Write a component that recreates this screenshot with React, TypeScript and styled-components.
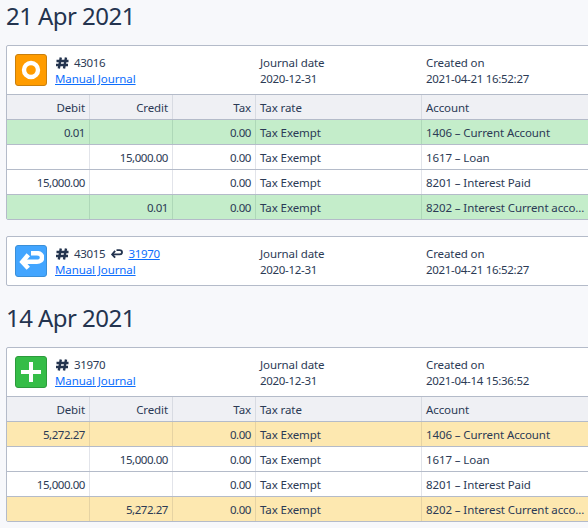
import React from "react";
import styled, { createGlobalStyle } from "styled-components";

const Global = createGlobalStyle`
  html, body { margin: 0; padding: 0; background: #f7f8fb; overflow: hidden; }
  body { font-family: "Noto Sans", "Open Sans", sans-serif; font-size: 11.5px; letter-spacing: -0.1px; color: #2b3a55; width: 588px; height: 528px; }
`;
const Page = styled.div`padding: 0 0 0 6px; width: 640px; box-sizing: border-box;`;
const Heading = styled.h2`
  margin: 0; height: 45px; box-sizing: border-box;
  font-size: 24px; font-weight: 400; line-height: 32px; color: #24344f; letter-spacing: -0.55px;
`;
const Card = styled.div<{ $gap?: number }>`
  background: #fff; border: 1px solid #b4bbc9; border-radius: 2px;
  width: 640px; box-sizing: border-box; margin-bottom: ${(p) => p.$gap ?? 0}px;
`;
const Head = styled.div`
  height: 48px; display: grid; grid-template-columns: 253px 166px 1fr; align-items: center;
`;
const Identity = styled.div`display: flex; align-items: center; padding-left: 8px; gap: 8px;`;
const Badge = styled.div<{ $bg: string; $edge: string }>`
  width: 32px; height: 32px; border-radius: 3px; box-sizing: border-box;
  background: ${(p) => p.$bg}; border: 1px solid ${(p) => p.$edge};
  display: flex; align-items: center; justify-content: center;
`;
const Lines = styled.div`display: flex; flex-direction: column; line-height: 16px; padding-top: 2px;`;
const IdLine = styled.div`display: flex; align-items: center; gap: 5px;`;
const Num = styled.span`letter-spacing: -0.3px;`;
const Link = styled.a`color: #0d6efd; text-decoration: underline;`;
const Meta = styled.div`display: flex; flex-direction: column; line-height: 16px; padding-top: 2px; color: #2b3a55;`;
const Row = styled.div<{ $bg?: string }>`
  display: grid; grid-template-columns: 83px 83px 83px 166px 165px; height: 25px;
  box-sizing: border-box; border-top: 1px solid #b4bbc9;
  background: ${(p) => p.$bg ?? "#fff"};
`;
const Cell = styled.div<{ $right?: boolean; $line?: string; $num?: boolean }>`
  line-height: 26px; padding: 0 4px; box-sizing: border-box;
  text-align: ${(p) => (p.$right ? "right" : "left")};
  border-right: 1px solid ${(p) => p.$line ?? "#e2e4ea"};
  letter-spacing: ${(p) => (p.$num ? "-0.45px" : "-0.1px")};
  white-space: nowrap; overflow: hidden;
  &:last-child { border-right: 0; }
`;

const Hash = () => (
  <svg width="14" height="12" viewBox="0 0 14 12" fill="none" stroke="#24344f" strokeWidth="2.4">
    <path d="M5.8 .5 3.8 11.5M11 .5 9 11.5M1.5 4h12M1 8h12" />
  </svg>
);
const ReturnIcon = ({ size, color, w }: { size: number; color: string; w: number }) => (
  <svg width={size} height={size * 0.75} viewBox="0 0 24 18" fill="none" stroke={color} strokeWidth={w}>
    <path d="M9.5 3.5 4 10l5.5 6" strokeLinejoin="miter" />
    <path d="M4 10h13.5c3 0 4.7-1.6 4.7-4s-1.7-4-4.7-4H12" />
  </svg>
);

type R = [string, string, string, string?];
const Table = ({ rows, bg, line }: { rows: R[]; bg: string; line: string }) => (
  <>
    <Row $bg="#eff0f4">
      <Cell $right $line="#d8dbe2">Debit</Cell><Cell $right $line="#d8dbe2">Credit</Cell><Cell $right $line="#d8dbe2">Tax</Cell>
      <Cell $line="#d8dbe2">Tax rate</Cell><Cell>Account</Cell>
    </Row>
    {rows.map((r, i) => {
      const hi = r[3] === "hi";
      const cl = hi ? line : undefined;
      return (
        <Row key={i} $bg={hi ? bg : "#fff"}>
          <Cell $right $num $line={cl}>{r[0]}</Cell>
          <Cell $right $num $line={cl}>{r[1]}</Cell>
          <Cell $right $num $line={cl}>0.00</Cell>
          <Cell $line={cl}>Tax Exempt</Cell>
          <Cell $line={cl}>{r[2]}</Cell>
        </Row>
      );
    })}
  </>
);

const Header = ({ badge, no, extra, date, created }: { badge: React.ReactNode; no: string; extra?: React.ReactNode; date: string; created: string }) => (
  <Head>
    <Identity>
      {badge}
      <Lines>
        <IdLine><Hash /><Num>{no}</Num>{extra}</IdLine>
        <div><Link href="#">Manual Journal</Link></div>
      </Lines>
    </Identity>
    <Meta><span>Journal date</span><Num>{date}</Num></Meta>
    <Meta><span>Created on</span><Num>{created}</Num></Meta>
  </Head>
);

export default function App() {
  return (
    <Page>
      <Global />
      <Heading>21 Apr 2021</Heading>
      <Card $gap={16}>
        <Header
          no="43016" date="2020-12-31" created="2021-04-21 16:52:27"
          badge={
            <Badge $bg="#ff9c00" $edge="#c97f0d">
              <svg width="20" height="20" viewBox="0 0 20 20"><circle cx="10" cy="10" r="7" fill="none" stroke="#fff" strokeWidth="4.4" /></svg>
            </Badge>
          }
        />
        <Table bg="#c4edca" line="#aed8b8" rows={[
          ["0.01", "", "1406 – Current Account", "hi"],
          ["", "15,000.00", "1617 – Loan"],
          ["15,000.00", "", "8201 – Interest Paid"],
          ["", "0.01", "8202 – Interest Current acco…", "hi"],
        ]} />
      </Card>
      <Card $gap={16}>
        <Header
          no="43015" date="2020-12-31" created="2021-04-21 16:52:27"
          extra={<><ReturnIcon size={13} color="#24344f" w={3.4} /><Link href="#"><Num>31970</Num></Link></>}
          badge={
            <Badge $bg="#42a5ff" $edge="#3a8fd8">
              <ReturnIcon size={26} color="#fff" w={4.2} />
            </Badge>
          }
        />
      </Card>
      <Heading>14 Apr 2021</Heading>
      <Card>
        <Header
          no="31970" date="2020-12-31" created="2021-04-14 15:36:52"
          badge={
            <Badge $bg="#35bd47" $edge="#2c9a3c">
              <svg width="22" height="22" viewBox="0 0 22 22"><path d="M11 1v20M1 11h20" stroke="#fff" strokeWidth="4" /></svg>
            </Badge>
          }
        />
        <Table bg="#fde8b0" line="#e6d3a3" rows={[
          ["5,272.27", "", "1406 – Current Account", "hi"],
          ["", "15,000.00", "1617 – Loan"],
          ["15,000.00", "", "8201 – Interest Paid"],
          ["", "5,272.27", "8202 – Interest Current acco…", "hi"],
        ]} />
      </Card>
    </Page>
  );
}
